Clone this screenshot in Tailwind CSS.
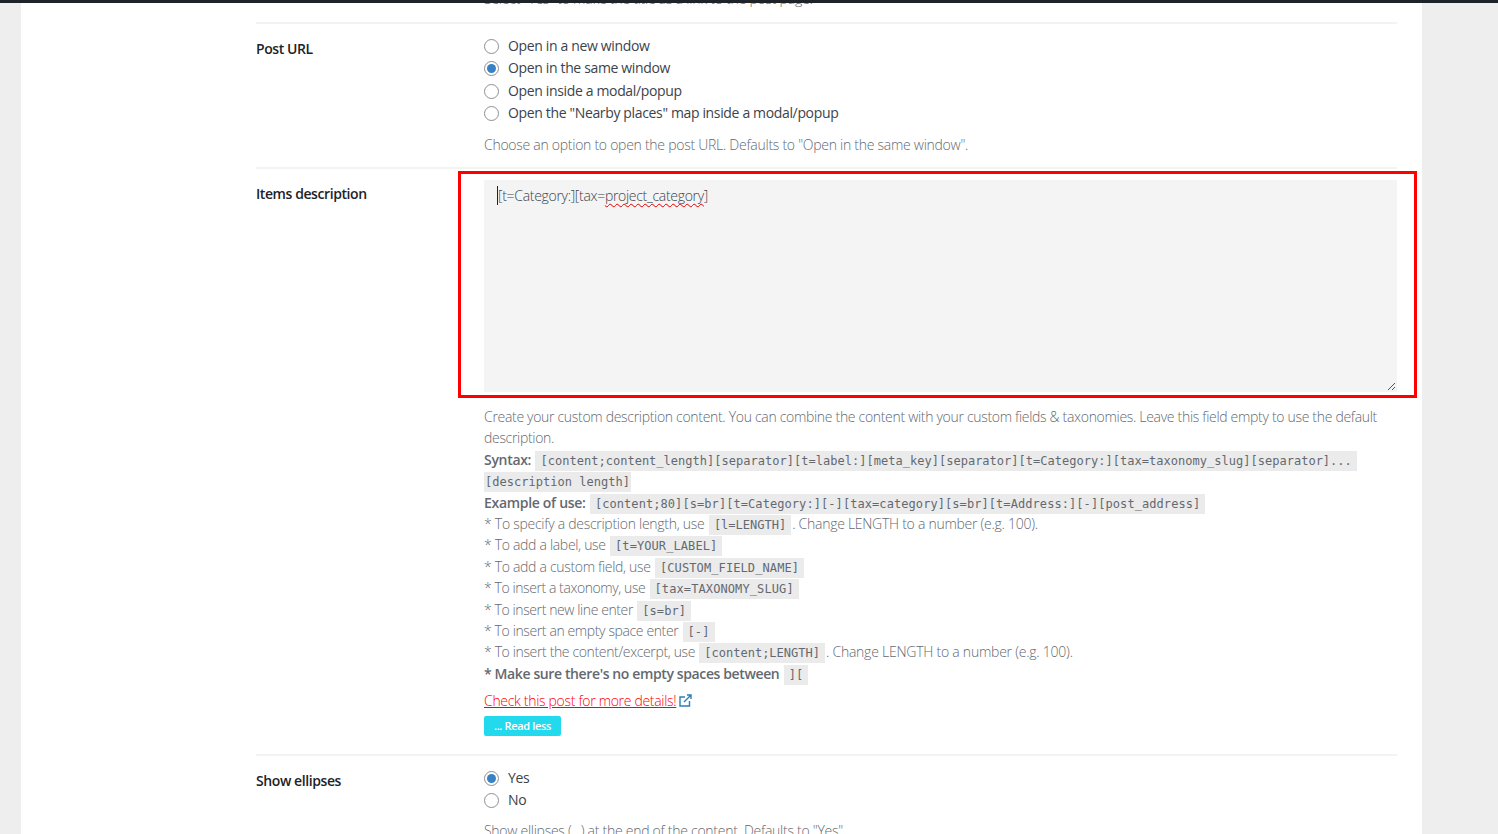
<!DOCTYPE html>
<html lang="en">
<head>
  <meta charset="UTF-8">
  <title>Settings</title>
  <script src="https://cdn.jsdelivr.net/npm/@tailwindcss/browser@4"></script>
</head>
<body class="bg-[#eeeeee] font-['Open_Sans',sans-serif] text-[14px] text-[#646970] h-[834px] overflow-hidden">
  <div class="h-[3px] bg-[#1d2327]"></div>
  <div class="relative ml-[21px] w-[1401px] h-[831px] bg-white overflow-hidden pl-[235px] pr-[25px]">
    <!-- clipped hint from the row above -->
    <p class="h-[20px] -mt-[14px] mb-[13px] ml-[228px] leading-[20px] tracking-[-0.23px] font-light">Select "Yes" to make the title as a link to the post page.</p>

    <div class="flex border-t-2 border-[#f3f3f3] h-[145px] pt-[11px]">
      <div class="w-[228px] pt-[3px] font-semibold text-[#1d2327] tracking-[-0.42px] leading-[21px]">Post URL</div>
      <div class="flex-1">
        <div class="flex flex-col text-[#3c434a] tracking-[-0.35px] leading-[22.4px]">
          <label class="flex items-center gap-[9px]"><span class="w-[15px] h-[15px] rounded-full border border-[#8c8f94] bg-white"></span>Open in a new window</label>
          <label class="flex items-center gap-[9px]"><span class="w-[15px] h-[15px] rounded-full border border-[#8c8f94] bg-white flex items-center justify-center"><span class="w-[9px] h-[9px] rounded-full bg-[#3582c4]"></span></span>Open in the same window</label>
          <label class="flex items-center gap-[9px]"><span class="w-[15px] h-[15px] rounded-full border border-[#8c8f94] bg-white"></span>Open inside a modal/popup</label>
          <label class="flex items-center gap-[9px]"><span class="w-[15px] h-[15px] rounded-full border border-[#8c8f94] bg-white"></span>Open the "Nearby places" map inside a modal/popup</label>
        </div>
        <p class="mt-[9px] font-light tracking-[-0.27px] leading-[21px]">Choose an option to open the post URL. Defaults to "Open in the same window".</p>
      </div>
    </div>

    <div class="flex border-t-2 border-[#f3f3f3] h-[587px] pt-[11px]">
      <div class="w-[228px] pt-[3px] font-semibold text-[#1d2327] tracking-[-0.42px] leading-[21px]">Items description</div>
      <div class="flex-1 min-w-0">
        <div class="relative h-[212px] bg-[#f4f4f4] px-[13px] py-[5px] leading-[21px] font-light text-[#3c434a] tracking-[-0.3px]">
          <span class="border-l border-[#1d2327]">[t=Category:][tax=<span class="underline decoration-wavy decoration-[#e00000] decoration-1 underline-offset-[2px] [text-decoration-skip-ink:none]">project_category</span>]</span>
          <svg class="absolute right-[1px] bottom-[1px]" width="9" height="9" viewBox="0 0 9 9"><path d="M1 8 8 1M5 8 8 5" stroke="#555" stroke-width="1"/></svg>
        </div>
        <div class="mt-[14px] font-light tracking-[-0.31px] leading-[21.4px]">
          <p>Create your custom description content. You can combine the content with your custom fields &amp; taxonomies. Leave this field empty to use the default description.</p>
          <p><b class="font-semibold">Syntax:</b> <code class="font-['DejaVu_Sans_Mono',monospace] text-[12px] leading-none tracking-[0.02px] font-normal bg-[#ebebeb] px-[5px] py-[3px] mx-[1px]">[content;content_length][separator][t=label:][meta_key][separator][t=Category:][tax=taxonomy_slug][separator]...</code></p>
          <p><code class="font-['DejaVu_Sans_Mono',monospace] text-[12px] leading-none tracking-[0.02px] font-normal bg-[#ebebeb] px-[1px] py-[3px]">[description length]</code></p>
          <p><b class="font-semibold">Example of use:</b> <code class="font-['DejaVu_Sans_Mono',monospace] text-[12px] leading-none tracking-[0.07px] font-normal bg-[#ebebeb] px-[5px] py-[3px] mx-[1px]">[content;80][s=br][t=Category:][-][tax=category][s=br][t=Address:][-][post_address]</code></p>
          <p class="tracking-[-0.27px]">* To specify a description length, use <code class="font-['DejaVu_Sans_Mono',monospace] text-[12px] leading-none tracking-normal font-normal bg-[#ebebeb] px-[5px] py-[3px] mx-[1px]">[l=LENGTH]</code>. Change LENGTH to a number (e.g. 100).</p>
          <p>* To add a label, use <code class="font-['DejaVu_Sans_Mono',monospace] text-[12px] leading-none tracking-[0.08px] font-normal bg-[#ebebeb] px-[5px] py-[3px] mx-[1px]">[t=YOUR_LABEL]</code></p>
          <p>* To add a custom field, use <code class="font-['DejaVu_Sans_Mono',monospace] text-[12px] leading-none tracking-[0.1px] font-normal bg-[#ebebeb] px-[5px] py-[3px] mx-[1px]">[CUSTOM_FIELD_NAME]</code></p>
          <p class="tracking-[-0.42px]">* To insert a taxonomy, use <code class="font-['DejaVu_Sans_Mono',monospace] text-[12px] leading-none tracking-[0.1px] font-normal bg-[#ebebeb] px-[5px] py-[3px] mx-[1px]">[tax=TAXONOMY_SLUG]</code></p>
          <p class="tracking-[-0.4px]">* To insert new line enter <code class="font-['DejaVu_Sans_Mono',monospace] text-[12px] leading-none tracking-[0.1px] font-normal bg-[#ebebeb] px-[5px] py-[3px] mx-[1px]">[s=br]</code></p>
          <p class="tracking-[-0.38px]">* To insert an empty space enter <code class="font-['DejaVu_Sans_Mono',monospace] text-[12px] leading-none tracking-[0.1px] font-normal bg-[#ebebeb] px-[5px] py-[3px] mx-[1px]">[-]</code></p>
          <p class="tracking-[-0.36px]">* To insert the content/excerpt, use <code class="font-['DejaVu_Sans_Mono',monospace] text-[12px] leading-none tracking-normal font-normal bg-[#ebebeb] px-[5px] py-[3px] mx-[1px]">[content;LENGTH]</code><span class="tracking-[-0.24px]">. Change LENGTH to a number (e.g. 100).</span></p>
          <p class="font-semibold tracking-[-0.38px]">* Make sure there's no empty spaces between <code class="font-['DejaVu_Sans_Mono',monospace] text-[12px] leading-none tracking-normal font-normal bg-[#ebebeb] px-[5px] py-[3px] mx-[1px]">][</code></p>
          <p class="mt-[6px] flex items-center gap-[3px]"><a href="#" class="text-[#ff0000] underline">Check this post for more details!</a>
            <svg width="13" height="13" viewBox="0 0 13 13" fill="none" stroke="#2980b9" stroke-width="1.4"><path d="M10.5 7v5H1V3h5"/><path d="M5 8 12 1M8 1h4v4"/></svg>
          </p>
          <div class="mt-[4px] flex w-[77px] items-center justify-center h-[20px] rounded-[2px] bg-[#22d9ee] text-white text-[11px] font-semibold tracking-[-0.35px]">... Read less</div>
        </div>
      </div>
    </div>

    <div class="flex border-t-2 border-[#f3f3f3] pt-[11px]">
      <div class="w-[228px] pt-[3px] font-semibold text-[#1d2327] tracking-[-0.42px] leading-[21px]">Show ellipses</div>
      <div class="flex-1">
        <div class="flex flex-col text-[#3c434a] tracking-[-0.35px] leading-[22.4px]">
          <label class="flex items-center gap-[9px]"><span class="w-[15px] h-[15px] rounded-full border border-[#8c8f94] bg-white flex items-center justify-center"><span class="w-[9px] h-[9px] rounded-full bg-[#3582c4]"></span></span>Yes</label>
          <label class="flex items-center gap-[9px]"><span class="w-[15px] h-[15px] rounded-full border border-[#8c8f94] bg-white"></span>No</label>
        </div>
        <p class="mt-[8px] font-light tracking-[-0.27px] leading-[21px]">Show ellipses (...) at the end of the content. Defaults to "Yes".</p>
      </div>
    </div>

    <!-- red annotation box drawn over the screenshot -->
    <div class="absolute left-[437px] top-[168px] w-[959px] h-[227px] border-[3px] border-[#ff0000]"></div>
  </div>
</body>
</html>
